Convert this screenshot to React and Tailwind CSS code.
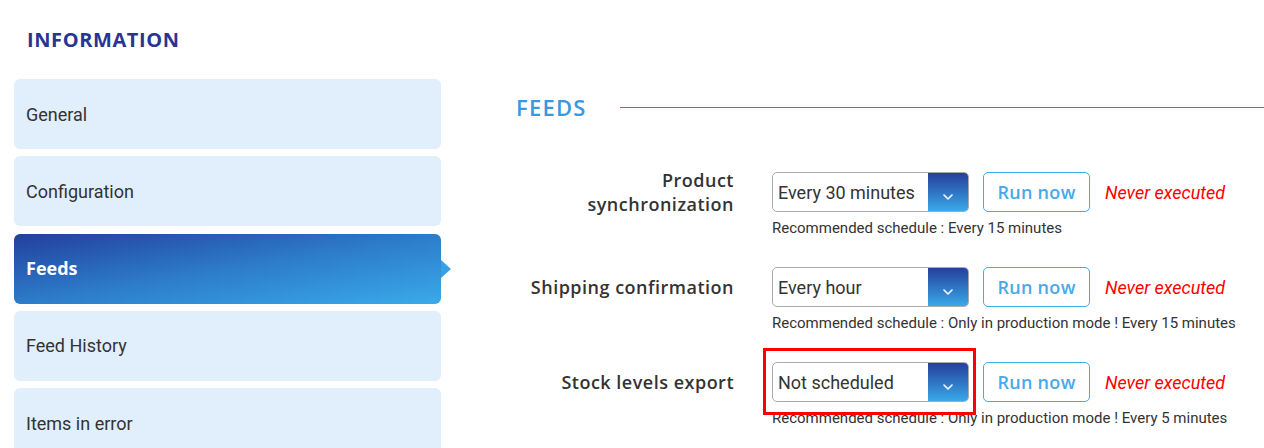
import React from "react";

const sans = { fontFamily: "Roboto, 'Liberation Sans', sans-serif" };
const head = { fontFamily: "'Open Sans', 'Liberation Sans', sans-serif" };

function Chevron() {
  return (
    <svg width="12" height="8" viewBox="0 0 12 8" className="mt-[9px]">
      <path d="M2 2 L6 6 L10 2" fill="none" stroke="white" strokeWidth="1.6" strokeLinecap="round" strokeLinejoin="round" />
    </svg>
  );
}

function Row({ label, value, rec, highlight }) {
  const select = (
    <div className="flex h-[40px] w-[197px] overflow-hidden rounded-[5px] border border-[#aaaaaa] bg-white">
      <div className="flex flex-1 items-center pl-[5px] text-[18px] text-[#333333]" style={sans}>{value}</div>
      <div className="flex w-[40px] items-center justify-center bg-gradient-to-b from-[#253f9b] to-[#3aa9ea]">
        <Chevron />
      </div>
    </div>
  );
  return (
    <div className="flex items-start">
      <div className="flex h-[40px] w-[238px] items-center justify-end text-right text-[18px] font-semibold leading-[24px] tracking-[0.5px] text-[#333333]" style={head}>
        <span className={label.length > 22 ? "w-[180px]" : ""}>{label}</span>
      </div>
      <div className="ml-[38px] flex flex-col">
        <div className="flex items-center">
          <div className="relative">
            {select}
            {highlight && (
              <div className="absolute left-[-9px] top-[-14px] h-[67px] w-[213px] border-[3px] border-[#ff0000]" />
            )}
          </div>
          <button className="ml-[14px] h-[40px] w-[107px] rounded-[5px] border border-[#3caeea] bg-white text-[18px] font-semibold tracking-[0.3px] text-[#4aa8ea]" style={head}>Run now</button>
          <span className="ml-[15px] text-[18px] italic text-[#ff0000]" style={sans}>Never executed</span>
        </div>
        <div className="mt-[7px] text-[15px] leading-[18px] text-[#333333]" style={sans}>{rec}</div>
      </div>
    </div>
  );
}

export default function App() {
  const items = ["General", "Configuration", "Feeds", "Feed History", "Items in error"];
  return (
    <div className="h-[448px] w-[1264px] overflow-hidden bg-white">
      <div className="flex">
        <div className="w-[441px] shrink-0 pl-[14px]">
          <div className="pl-[13px] pt-[27px] text-[20px] font-bold leading-[26px] tracking-[0.6px] text-[#2a3592]" style={head}>INFORMATION</div>
          <div className="mt-[26px] flex flex-col gap-[7.25px]">
            {items.map((it) =>
              it === "Feeds" ? (
                <div key={it} className="relative flex h-[70px] items-center rounded-[6px] bg-gradient-to-br from-[#233f9c] via-[#2d7cc9] to-[#3aaaea] pl-[12px] text-[18px] font-bold text-white" style={head}>
                  {it}
                  <div className="absolute right-[-10px] top-[26px] h-0 w-0 border-y-[9px] border-l-[10px] border-y-transparent border-l-[#36a1e4]" />
                </div>
              ) : (
                <div key={it} className="flex h-[70px] items-center rounded-[6px] bg-[#e1eefc] pl-[12px] text-[18px] text-[#333333]" style={sans}>
                  {it}
                </div>
              )
            )}
          </div>
        </div>
        <div className="flex-1 pt-[91px]">
          <div className="flex items-center pl-[75px]">
            <div className="text-[22px] font-semibold tracking-[1.2px] text-[#3b97e0]" style={head}>FEEDS</div>
            <div className="ml-[33px] h-px flex-1 bg-[#4a7ab8]" />
          </div>
          <div className="mt-[48px] flex flex-col gap-[30px] pl-[55px]">
            <Row label="Product synchronization" value="Every 30 minutes" rec="Recommended schedule : Every 15 minutes" />
            <Row label="Shipping confirmation" value="Every hour" rec="Recommended schedule : Only in production mode ! Every 15 minutes" />
            <Row label="Stock levels export" value="Not scheduled" rec="Recommended schedule : Only in production mode ! Every 5 minutes" highlight />
          </div>
        </div>
      </div>
    </div>
  );
}
